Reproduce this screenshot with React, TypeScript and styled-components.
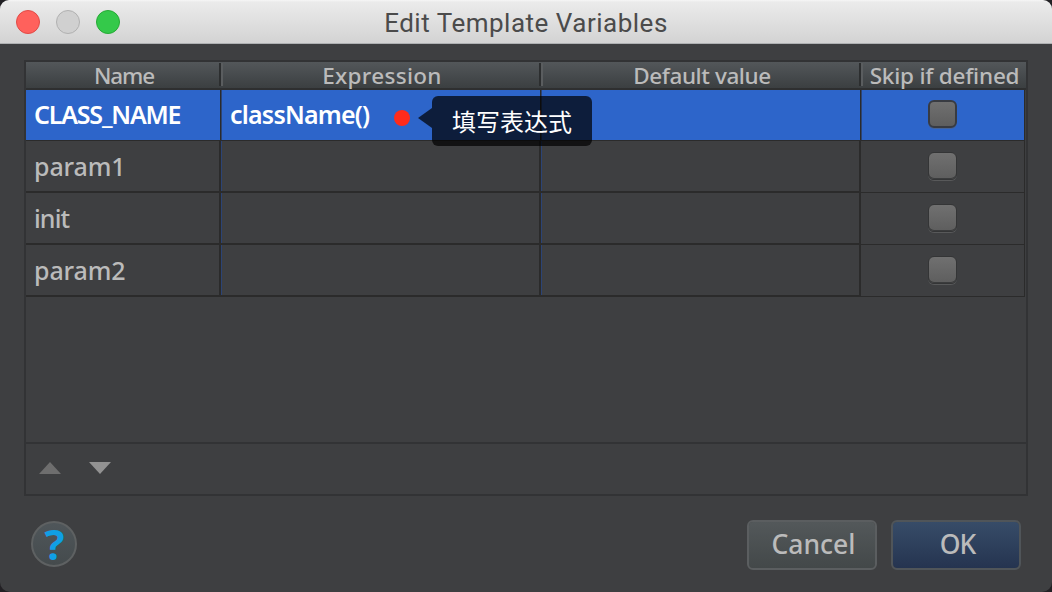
import React from 'react';
import styled, { createGlobalStyle } from 'styled-components';

const GlobalStyle = createGlobalStyle`
    * {
        box-sizing: border-box;
    }

    body {
        margin: 0;
        background: #222024;
        font-family: 'Noto Sans', 'Noto Sans CJK SC', sans-serif;
    }
`;

const Window = styled.div`
    display: flex;
    flex-direction: column;
    width: 1052px;
    height: 592px;
    overflow: hidden;
    border-radius: 9px 9px 10px 10px;
    background: #3e3f41;
    color: #bbbbbb;
`;

const TitleBar = styled.header`
    display: grid;
    grid-template-columns: 120px 1fr 120px;
    align-items: center;
    flex: none;
    height: 44px;
    padding: 0 16px;
    border-bottom: 1px solid #afb1b3;
    background: linear-gradient(#f6f6f6 0, #ebebeb 2px, #d3d3d3 100%);
`;

const Lights = styled.div`
    display: flex;
    gap: 16px;
`;

const Light = styled.span<{ $fill: string; $edge: string }>`
    width: 24px;
    height: 24px;
    border: 1px solid ${({ $edge }) => $edge};
    border-radius: 50%;
    background: ${({ $fill }) => $fill};
`;

const Title = styled.h1`
    margin: 2px 0 0;
    font-family: Roboto, sans-serif;
    font-size: 26px;
    font-weight: 400;
    line-height: 30px;
    letter-spacing: 0.5px;
    text-align: center;
    white-space: nowrap;
    color: #4b4b4b;
`;

const Panel = styled.section`
    display: flex;
    flex-direction: column;
    flex: none;
    width: 1004px;
    height: 436px;
    margin: 16px 24px 0;
    border: 2px solid #323335;
`;

const columns = '195px 320px 320px 1fr';

const HeaderRow = styled.div`
    display: grid;
    grid-template-columns: ${columns};
    height: 28px;
    padding-bottom: 1px;
    border-bottom: 2px solid #2e2f30;
    background: linear-gradient(#53575a, #3b3f41);
`;

const HeaderCell = styled.div<{ $spacing?: string }>`
    display: flex;
    align-items: center;
    justify-content: center;
    height: 23px;
    margin-top: 1px;
    padding: 2px 0 0 4px;
    border-right: 2px solid #2c2e2f;
    box-shadow: inset 2px 0 #5a5d5f;
    font-size: 22.5px;
    font-weight: 500;
    line-height: 24px;
    letter-spacing: ${({ $spacing = '0' }) => $spacing};
    white-space: nowrap;

    &:first-child {
        padding-left: 3px;
        box-shadow: none;
    }

    &:last-child {
        padding-left: 2px;
        border-right: 0;
    }
`;

const Rows = styled.div`
    flex: 1;
`;

const Row = styled.div<{ $selected?: boolean }>`
    display: grid;
    grid-template-columns: ${columns};
    height: ${({ $selected }) => ($selected ? '51px' : '52px')};
    width: 999px;
    color: ${({ $selected }) => ($selected ? '#ffffff' : '#bbbbbb')};
    background: ${({ $selected }) => ($selected ? '#2d65ca' : 'transparent')};
`;

const Cell = styled.div<{ $spacing?: string; $selected?: boolean }>`
    position: relative;
    display: flex;
    align-items: center;
    padding-left: 8px;
    border-right: 2px solid #2b2b2b;
    border-bottom: ${({ $selected }) => ($selected ? '1px' : '2px')} solid #2b2b2b;
    font-size: 25px;
    font-weight: 500;
    line-height: 34px;
    letter-spacing: ${({ $spacing = '0' }) => $spacing};
    white-space: nowrap;
    ${({ $selected }) =>
        $selected &&
        `
        padding-bottom: 2px;
        border-right-width: 1px;
        font-weight: 600;

        & + & {
            padding-left: 9px;
            box-shadow: inset 1px 0 #2c4475;
        }
    `}
`;

const CheckCell = styled.div<{ $selected?: boolean }>`
    display: flex;
    justify-content: center;
    padding-top: 10px;
    border-right: 1px solid #2b2b2b;
    border-bottom: 1px solid #2b2b2b;
    box-shadow: ${({ $selected }) => ($selected ? 'inset 1px 0 #2c4475' : 'none')};
`;

const Check = styled.span<{ $selected?: boolean }>`
    width: 29px;
    height: 28px;
    margin-top: ${({ $selected }) => ($selected ? '0' : '1px')};
    border: ${({ $selected }) => ($selected ? '2px solid #383b42' : '1px solid #343536')};
    border-radius: 6px;
    background: linear-gradient(#707070, #5e5e5e);
    box-shadow: ${({ $selected }) =>
        $selected ? '0 1px #466397' : 'inset 0 -1px #3b3c3d, 0 1px #58595a'};
`;

const Dot = styled.i`
    position: absolute;
    left: 173px;
    top: 20px;
    width: 16px;
    height: 16px;
    border-radius: 50%;
    background: #ff2b1b;
`;

const Tooltip = styled.div`
    position: absolute;
    z-index: 2;
    left: 211px;
    top: 6px;
    width: 160px;
    height: 50px;
    padding: 1px 0 0 20px;
    border-radius: 6px;
    background: rgba(0, 0, 0, 0.71);
    color: #ffffff;
    font: 400 24px/48px 'Noto Sans CJK SC', sans-serif;
    letter-spacing: 0;

    &::before {
        content: '';
        position: absolute;
        right: 100%;
        top: 12px;
        border: solid transparent;
        border-width: 10px 14px 10px 0;
        border-right-color: rgba(0, 0, 0, 0.71);
    }
`;

const MoveBar = styled.div`
    display: flex;
    gap: 28px;
    height: 52px;
    padding: 18px 13px;
    border-top: 2px solid #323335;
`;

const Footer = styled.footer`
    display: flex;
    gap: 14px;
    padding: 23px 31px 0;
`;

const HelpButton = styled.button`
    display: flex;
    align-items: center;
    justify-content: center;
    width: 46px;
    height: 46px;
    margin: 2px auto 0 0;
    padding: 0 0 1px 1px;
    border: 2px solid #5e6162;
    border-radius: 50%;
    background: linear-gradient(#4f565a, #454b4d);
    color: #109fe5;
    font: 700 42px/42px 'Open Sans', sans-serif;
`;

const Button = styled.button<{ $primary?: boolean }>`
    width: 130px;
    height: 50px;
    margin-top: 1px;
    padding: 0 0 3px 3px;
    border: 2px solid ${({ $primary }) => ($primary ? '#505559' : '#5b5e60')};
    border-radius: 6px;
    background: ${({ $primary }) =>
        $primary ? 'linear-gradient(#374c68, #253450)' : 'linear-gradient(#53585a, #434849)'};
    background-clip: padding-box;
    color: #bbbbbb;
    font: 500 26.5px/36px 'Noto Sans', sans-serif;
    letter-spacing: ${({ $primary }) => ($primary ? '-1px' : '0')};
`;

type Variable = {
    name: string;
    expression?: string;
    spacing?: string;
    selected?: boolean;
};

const variables: Variable[] = [
    { name: 'CLASS_NAME', expression: 'className()', spacing: '-1.2px', selected: true },
    { name: 'param1', spacing: '-0.1px' },
    { name: 'init', spacing: '-0.9px' },
    { name: 'param2', spacing: '-0.1px' },
];

const App: React.FC = () => {
    return (
        <>
            <GlobalStyle />
            <Window>
                <TitleBar>
                    <Lights>
                        <Light $fill="#ff615c" $edge="#e24a46" />
                        <Light $fill="#d0d0d0" $edge="#b1b1b1" />
                        <Light $fill="#34c94a" $edge="#26aa35" />
                    </Lights>
                    <Title>Edit Template Variables</Title>
                </TitleBar>
                <Panel>
                    <HeaderRow>
                        <HeaderCell $spacing="-1.2px">Name</HeaderCell>
                        <HeaderCell $spacing="0.3px">Expression</HeaderCell>
                        <HeaderCell $spacing="-0.4px">Default value</HeaderCell>
                        <HeaderCell $spacing="-0.2px">Skip if defined</HeaderCell>
                    </HeaderRow>
                    <Rows>
                        {variables.map(({ name, expression, spacing, selected }) => (
                            <Row key={name} $selected={selected}>
                                <Cell $selected={selected} $spacing={spacing}>
                                    {name}
                                </Cell>
                                <Cell $selected={selected} $spacing="-0.8px">
                                    {expression}
                                    {selected && (
                                        <>
                                            <Dot />
                                            <Tooltip>填写表达式</Tooltip>
                                        </>
                                    )}
                                </Cell>
                                <Cell $selected={selected} />
                                <CheckCell $selected={selected}>
                                    <Check $selected={selected} />
                                </CheckCell>
                            </Row>
                        ))}
                    </Rows>
                    <MoveBar>
                        <svg width="22" height="12">
                            <path d="M0 12 11 0 22 12Z" fill="#6e6e6e" />
                        </svg>
                        <svg width="22" height="12">
                            <path d="M0 0H22L11 12Z" fill="#929292" />
                        </svg>
                    </MoveBar>
                </Panel>
                <Footer>
                    <HelpButton>?</HelpButton>
                    <Button>Cancel</Button>
                    <Button $primary>OK</Button>
                </Footer>
            </Window>
        </>
    );
};
export default App;
